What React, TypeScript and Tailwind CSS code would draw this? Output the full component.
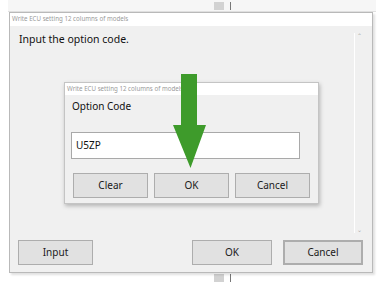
const sans = "font-['Noto_Sans','Open_Sans',sans-serif]"

function WinButton({ label, className }: { label: string; className: string }) {
  return (
    <div className={`flex items-center justify-center bg-[#e1e1e1] border border-[#adadad] text-[10px] text-[#1a1a1a] ${className}`}>
      {label}
    </div>
  )
}

export default function App() {
  return (
    <div className={`relative w-[383px] h-[287px] bg-white overflow-hidden ${sans}`}>
      {/* window behind */}
      <div className="absolute left-[8px] top-0 w-[368px] h-[12px] bg-[#f6f6f6] border-b border-[#e0e0e0]" />
      <div className="absolute left-[214px] top-[2px] w-[10px] h-[8px] bg-[#d2d2d2]" />
      <div className="absolute left-[230px] top-[2px] w-px h-[8px] bg-[#777]" />
      <div className="absolute left-[214px] top-[274px] w-[10px] h-[8px] bg-[#d2d2d2]" />
      <div className="absolute left-[230px] top-[274px] w-px h-[8px] bg-[#777]" />

      {/* main window */}
      <div className="absolute left-[9px] top-[12px] w-[364px] h-[261px] flex flex-col border border-[#b9b9b9] bg-[#f0f0f0] shadow-[2px_2px_2px_rgba(0,0,0,0.12)]">
        <div className="h-[13px] bg-white flex items-center pl-[2px] text-[6.2px] leading-none text-[#9a9a9a]">
          Write ECU setting 12 columns of models
        </div>
        <div className="flex flex-1">
          <div className="flex-1 pl-[9px] pt-[6px] text-[10.5px] text-[#111]">Input the option code.</div>
          <div className="w-[9px] mr-[9px] mt-[7px] mb-[4px] border-l border-white flex flex-col items-center justify-between text-[6px] leading-none text-[#aaa]">
            <span>⌃</span>
            <span>⌄</span>
          </div>
        </div>
        <div className="flex items-center h-[35px] pl-[8px] pr-[9px] pb-[5px]">
          <WinButton label="Input" className="w-[75px] h-[25px]" />
          <div className="flex-1" />
          <WinButton label="OK" className="w-[80px] h-[25px]" />
          <WinButton label="Cancel" className="w-[80px] h-[25px] ml-[11px] border-[#0078d7] border-2" />
        </div>
      </div>

      {/* option code dialog */}
      <div className="absolute left-[64px] top-[82px] w-[255px] h-[122px] flex flex-col border border-[#c4c4c4] bg-[#f0f0f0] shadow-[1px_2px_4px_rgba(0,0,0,0.25)]">
        <div className="h-[12px] bg-white flex items-center pl-[2px] text-[6.2px] leading-none text-[#9a9a9a]">
          Write ECU setting 12 columns of models
        </div>
        <div className="pl-[7px] pt-[4px] text-[10px] text-[#111]">Option Code</div>
        <div className="ml-[6px] mt-[18px] w-[229px] h-[27px] bg-white border border-[#a9a9a9] flex items-center pl-[4px] text-[10px] text-[#111]">
          U5ZP
        </div>
        <div className="flex gap-[6px] ml-[8px] mt-[14px]">
          <WinButton label="Clear" className="w-[75px] h-[25px]" />
          <WinButton label="OK" className="w-[75px] h-[25px]" />
          <WinButton label="Cancel" className="w-[75px] h-[25px]" />
        </div>
      </div>

      {/* green arrow */}
      <svg className="absolute left-[172px] top-[74px]" width="36" height="96" viewBox="0 0 36 96">
        <polygon points="9,0 25,0 25,51 34,51 18.5,94 1,51 9,51" fill="#3e9b2b" />
      </svg>
    </div>
  )
}
